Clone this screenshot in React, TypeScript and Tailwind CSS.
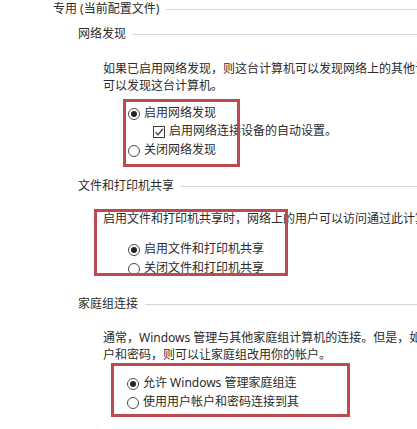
import React from "react";

const font = "font-['Noto_Sans','Noto_Sans_CJK_SC',sans-serif]";

function Heading({ text, indent }: { text: string; indent: string }) {
  return (
    <div className={`flex items-center h-[18px] leading-[18px] ${indent}`}>
      <span className="whitespace-nowrap">{text}</span>
      <div className="flex-1 h-px bg-[#d4d4d4] ml-[7px]" />
    </div>
  );
}

function Radio({ checked, label }: { checked?: boolean; label: string }) {
  return (
    <div className="flex items-center h-[19px] whitespace-nowrap">
      <span className="w-[12px] h-[12px] rounded-full border border-[#4d4d4d] flex items-center justify-center shrink-0 mt-[2px]">
        {checked && <span className="w-[6px] h-[6px] rounded-full bg-[#262626]" />}
      </span>
      <span className="ml-[4px]">{label}</span>
    </div>
  );
}

function Checkbox({ label }: { label: string }) {
  return (
    <div className="flex items-center h-[18px] whitespace-nowrap">
      <span className="w-[12px] h-[12px] border border-[#3a3a3a] flex items-center justify-center shrink-0 mt-[1px]">
        <svg width="10" height="10" viewBox="0 0 10 10">
          <path d="M1.5 5.2 L4 7.8 L8.8 1.8" fill="none" stroke="#2a2a2a" strokeWidth="1.2" />
        </svg>
      </span>
      <span className="ml-[4px]">{label}</span>
    </div>
  );
}

export default function App() {
  return (
    <div className={`w-[417px] h-[429px] overflow-hidden bg-white text-[12px] text-[#2b2b2b] ${font}`}>
      <Heading text="专用 (当前配置文件)" indent="pl-[53px]" />

      {/* 网络发现 */}
      <div className="mt-[7px]">
        <Heading text="网络发现" indent="pl-[78px]" />
      </div>
      <div className="mt-[17px] pl-[103px] leading-[17px] whitespace-nowrap">
        <div>如果已启用网络发现，则这台计算机可以发现网络上的其他计算机和设备，而其他网络计算机亦</div>
        <div>可以发现这台计算机。</div>
      </div>
      <div className="relative mt-[10px]">
        <div className="pl-[128px]">
          <div className="h-[18px] flex items-center">
            <Radio checked label="启用网络发现" />
          </div>
        </div>
        <div className="pl-[153px]">
          <Checkbox label="启用网络连接设备的自动设置。" />
        </div>
        <div className="pl-[128px]">
          <Radio label="关闭网络发现" />
        </div>
        <div className="absolute left-[123px] top-[-5px] w-[117px] h-[68px] border-[3px] border-[#bd4a4f] pointer-events-none" />
      </div>

      {/* 文件和打印机共享 */}
      <div className="mt-[18px]">
        <Heading text="文件和打印机共享" indent="pl-[78px]" />
      </div>
      <div className="relative mt-[15px]">
        <div className="pl-[103px] leading-[17px] whitespace-nowrap">
          启用文件和打印机共享时，网络上的用户可以访问通过此计算机共享的文件和打印机。
        </div>
        <div className="pl-[128px] mt-[12px]">
          <Radio checked label="启用文件和打印机共享" />
          <Radio label="关闭文件和打印机共享" />
        </div>
        <div className="absolute left-[94px] top-[-1px] w-[194px] h-[67px] border-[3px] border-[#bd4a4f] pointer-events-none" />
      </div>

      {/* 家庭组连接 */}
      <div className="mt-[18px]">
        <Heading text="家庭组连接" indent="pl-[78px]" />
      </div>
      <div className="mt-[16px] pl-[103px] leading-[17px] whitespace-nowrap">
        <div>通常，Windows 管理与其他家庭组计算机的连接。但是，如果你在所有计算机上都有相同的用户帐</div>
        <div>户和密码，则可以让家庭组改用你的帐户。</div>
      </div>
      <div className="relative mt-[10px]">
        <div className="pl-[127px]">
          <Radio checked label="允许 Windows 管理家庭组连" />
          <Radio label="使用用户帐户和密码连接到其" />
        </div>
        <div className="absolute left-[111px] top-[-10px] w-[239px] h-[54px] border-[3px] border-[#bd4a4f] pointer-events-none" />
      </div>

      <div className="mt-[16px] pl-[55px] leading-[18px] text-[#8a8a8a]">所有网络</div>
    </div>
  );
}
